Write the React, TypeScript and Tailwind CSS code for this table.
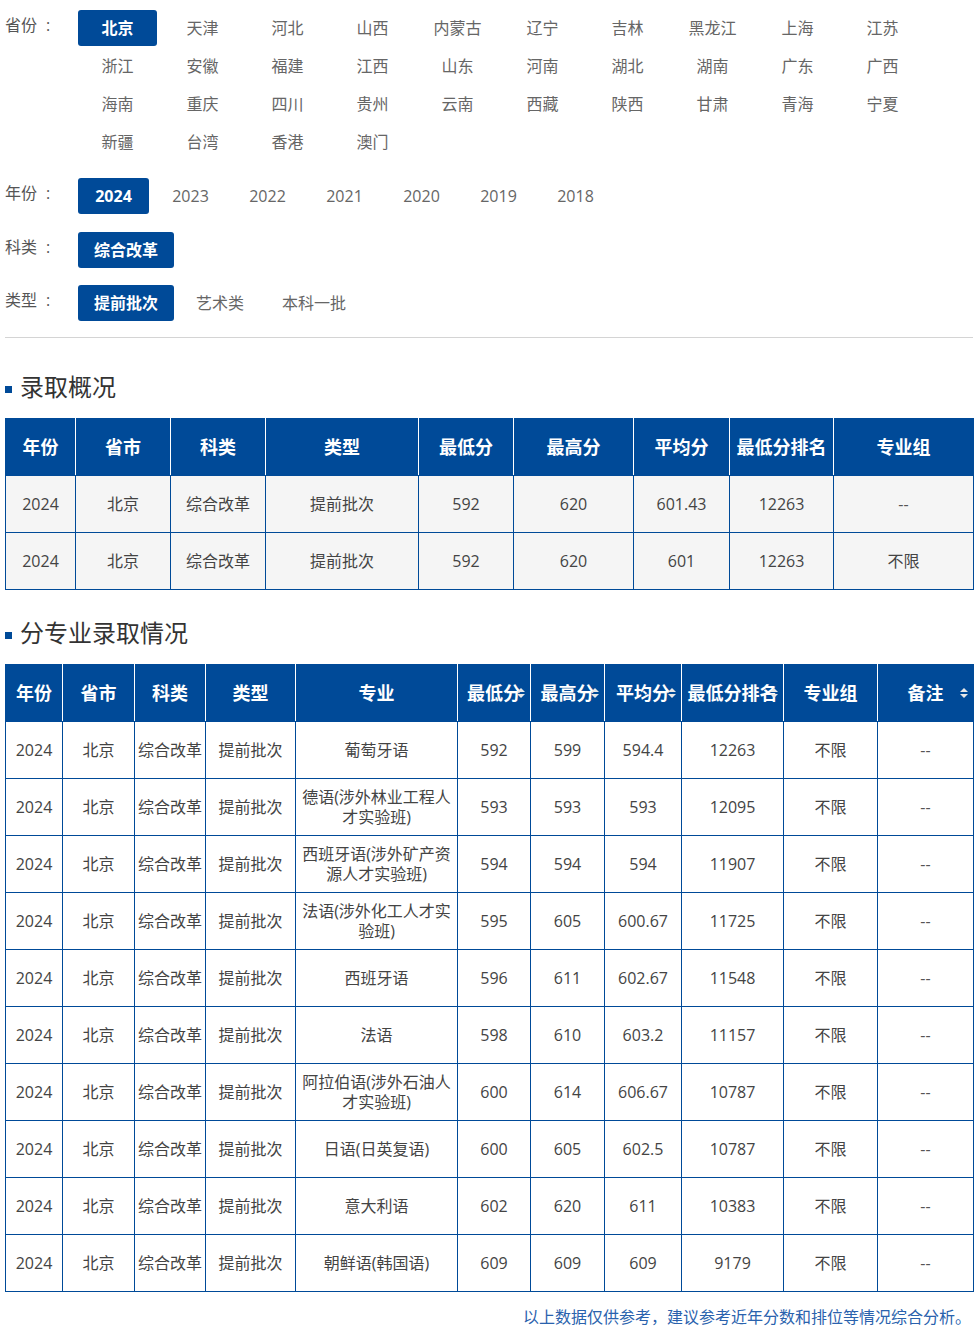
import React from "react";

const FONT = { fontFamily: '"Open Sans", "Noto Sans CJK SC", sans-serif' };

const provinces = [
  "北京", "天津", "河北", "山西", "内蒙古", "辽宁", "吉林", "黑龙江", "上海", "江苏",
  "浙江", "安徽", "福建", "江西", "山东", "河南", "湖北", "湖南", "广东", "广西",
  "海南", "重庆", "四川", "贵州", "云南", "西藏", "陕西", "甘肃", "青海", "宁夏",
  "新疆", "台湾", "香港", "澳门",
];
const years = ["2024", "2023", "2022", "2021", "2020", "2019", "2018"];

const t1Cols = [70, 95, 95, 153, 95, 120, 96, 104, 140];
const t1Head = ["年份", "省市", "科类", "类型", "最低分", "最高分", "平均分", "最低分排名", "专业组"];
const t1Rows = [
  ["2024", "北京", "综合改革", "提前批次", "592", "620", "601.43", "12263", "--"],
  ["2024", "北京", "综合改革", "提前批次", "592", "620", "601", "12263", "不限"],
];

const t2Cols = [57, 72, 71, 90, 162, 73, 74, 77, 102, 94, 96];
const t2Head: [string, boolean][] = [
  ["年份", false], ["省市", false], ["科类", false], ["类型", false], ["专业", false],
  ["最低分", true], ["最高分", true], ["平均分", true], ["最低分排名", true], ["专业组", false], ["备注", true],
];
const majors: [string, string, string, string, string][] = [
  ["葡萄牙语", "592", "599", "594.4", "12263"],
  ["德语(涉外林业工程人才实验班)", "593", "593", "593", "12095"],
  ["西班牙语(涉外矿产资源人才实验班)", "594", "594", "594", "11907"],
  ["法语(涉外化工人才实验班)", "595", "605", "600.67", "11725"],
  ["西班牙语", "596", "611", "602.67", "11548"],
  ["法语", "598", "610", "603.2", "11157"],
  ["阿拉伯语(涉外石油人才实验班)", "600", "614", "606.67", "10787"],
  ["日语(日英复语)", "600", "605", "602.5", "10787"],
  ["意大利语", "602", "620", "611", "10383"],
  ["朝鲜语(韩国语)", "609", "609", "609", "9179"],
];

function SortIcon() {
  return (
    <svg width="8" height="12" viewBox="0 0 8 12" className="absolute right-[5px] top-1/2 -translate-y-1/2">
      <polygon points="0,5 4,1 8,5" fill="#e8e8e8" />
      <polygon points="0,7 8,7 4,11" fill="#e8e8e8" />
    </svg>
  );
}

function Label({ text }: { text: string }) {
  return (
    <div className="w-[73px] shrink-0 text-[16px] leading-[30px] text-[#555]">
      {text}
      <span className="ml-[9px]">:</span>
    </div>
  );
}

function SectionTitle({ text }: { text: string }) {
  return (
    <div className="flex items-center h-[32px]">
      <span className="w-[7px] h-[7px] bg-[#004a98] mt-[5px] mr-[8px]" />
      <span className="text-[24px] leading-[32px] text-[#333]">{text}</span>
    </div>
  );
}

export default function App() {
  return (
    <div style={FONT} className="w-[978px] bg-white px-[5px] pt-[10px] pb-[8px]">
      {/* Province */}
      <div className="flex mb-[16px]">
        <Label text="省份" />
        <div className="flex flex-wrap">
          {provinces.map((p, i) => (
            <div
              key={p}
              className={
                i === 0
                  ? "w-[79px] h-[36px] mr-[6px] mb-[2px] flex items-center justify-center rounded-[3px] bg-[#004a98] text-white font-bold text-[16px]"
                  : "w-[79px] h-[36px] mr-[6px] mb-[2px] flex items-center justify-center text-[#666] text-[16px]"
              }
            >
              {p}
            </div>
          ))}
        </div>
      </div>
      {/* Year */}
      <div className="flex mb-[18px]">
        <Label text="年份" />
        <div className="flex">
          {years.map((y, i) => (
            <div
              key={y}
              className={
                i === 0
                  ? "w-[71px] h-[36px] mr-[6px] flex items-center justify-center rounded-[3px] bg-[#004a98] text-white font-bold text-[16px]"
                  : "w-[71px] h-[36px] mr-[6px] flex items-center justify-center text-[#666] text-[16px]"
              }
            >
              {y}
            </div>
          ))}
        </div>
      </div>
      {/* Subject */}
      <div className="flex mb-[17px]">
        <Label text="科类" />
        <div className="h-[36px] px-[16px] flex items-center rounded-[3px] bg-[#004a98] text-white font-bold text-[16px]">
          综合改革
        </div>
      </div>
      {/* Type */}
      <div className="flex mb-[16px]">
        <Label text="类型" />
        <div className="flex">
          <div className="h-[36px] px-[16px] mr-[6px] flex items-center rounded-[3px] bg-[#004a98] text-white font-bold text-[16px]">
            提前批次
          </div>
          <div className="h-[36px] px-[16px] mr-[6px] flex items-center text-[#666] text-[16px]">艺术类</div>
          <div className="h-[36px] px-[16px] mr-[6px] flex items-center text-[#666] text-[16px]">本科一批</div>
        </div>
      </div>
      <div className="h-px bg-[#d4d4d4]" />

      {/* Section 1 */}
      <div className="mt-[33px]">
        <SectionTitle text="录取概况" />
      </div>
      <table className="mt-[15px] w-[968px] table-fixed border-collapse border border-[#004a98]">
        <colgroup>
          {t1Cols.map((w, i) => (
            <col key={i} style={{ width: w }} />
          ))}
        </colgroup>
        <thead>
          <tr className="h-[57px] bg-[#004a98]">
            {t1Head.map((h, i) => (
              <th
                key={h}
                className={
                  i < t1Head.length - 1
                    ? "border border-[#004a98] border-r-white p-0 text-[18px] font-bold text-white"
                    : "border border-[#004a98] p-0 text-[18px] font-bold text-white"
                }
              >
                {h}
              </th>
            ))}
          </tr>
        </thead>
        <tbody>
          {t1Rows.map((r, ri) => (
            <tr key={ri} className="h-[57px] bg-[#f5f5f5]">
              {r.map((c, ci) => (
                <td
                  key={ci}
                  className={
                    "border border-[#004a98] p-0 text-center text-[16px] " +
                    (c === "--" ? "text-[#555]" : "text-[#444]")
                  }
                >
                  {c}
                </td>
              ))}
            </tr>
          ))}
        </tbody>
      </table>

      {/* Section 2 */}
      <div className="mt-[27px]">
        <SectionTitle text="分专业录取情况" />
      </div>
      <table className="mt-[15px] w-[968px] table-fixed border-collapse border border-[#004a98]">
        <colgroup>
          {t2Cols.map((w, i) => (
            <col key={i} style={{ width: w }} />
          ))}
        </colgroup>
        <thead>
          <tr className="h-[57px] bg-[#004a98]">
            {t2Head.map(([h, sort], i) => (
              <th
                key={h}
                className={
                  i < t2Head.length - 1
                    ? "relative border border-[#004a98] border-r-white p-0 text-[18px] font-bold text-white whitespace-nowrap"
                    : "relative border border-[#004a98] p-0 text-[18px] font-bold text-white whitespace-nowrap"
                }
              >
                {h}
                {sort && <SortIcon />}
              </th>
            ))}
          </tr>
        </thead>
        <tbody>
          {majors.map((m, ri) => (
            <tr key={ri} className="h-[57px] bg-white">
              <td className="border border-[#004a98] p-0 text-center text-[16px] text-[#444]">2024</td>
              <td className="border border-[#004a98] p-0 text-center text-[16px] text-[#444]">北京</td>
              <td className="border border-[#004a98] p-0 text-center text-[16px] text-[#444] whitespace-nowrap">综合改革</td>
              <td className="border border-[#004a98] p-0 text-center text-[16px] text-[#444] whitespace-nowrap">提前批次</td>
              <td className="border border-[#004a98] px-[5px] py-0 text-center text-[16px] leading-[20px] text-[#444]">
                {m[0]}
              </td>
              <td className="border border-[#004a98] p-0 text-center text-[16px] text-[#444]">{m[1]}</td>
              <td className="border border-[#004a98] p-0 text-center text-[16px] text-[#444]">{m[2]}</td>
              <td className="border border-[#004a98] p-0 text-center text-[16px] text-[#444]">{m[3]}</td>
              <td className="border border-[#004a98] p-0 text-center text-[16px] text-[#444]">{m[4]}</td>
              <td className="border border-[#004a98] p-0 text-center text-[16px] text-[#444]">不限</td>
              <td className="border border-[#004a98] p-0 text-center text-[16px] text-[#555]">--</td>
            </tr>
          ))}
        </tbody>
      </table>
      <div className="mt-[13px] pr-[2px] text-right text-[16px] leading-[24px] text-[#2a62ad]">
        以上数据仅供参考，建议参考近年分数和排位等情况综合分析。
      </div>
    </div>
  );
}
